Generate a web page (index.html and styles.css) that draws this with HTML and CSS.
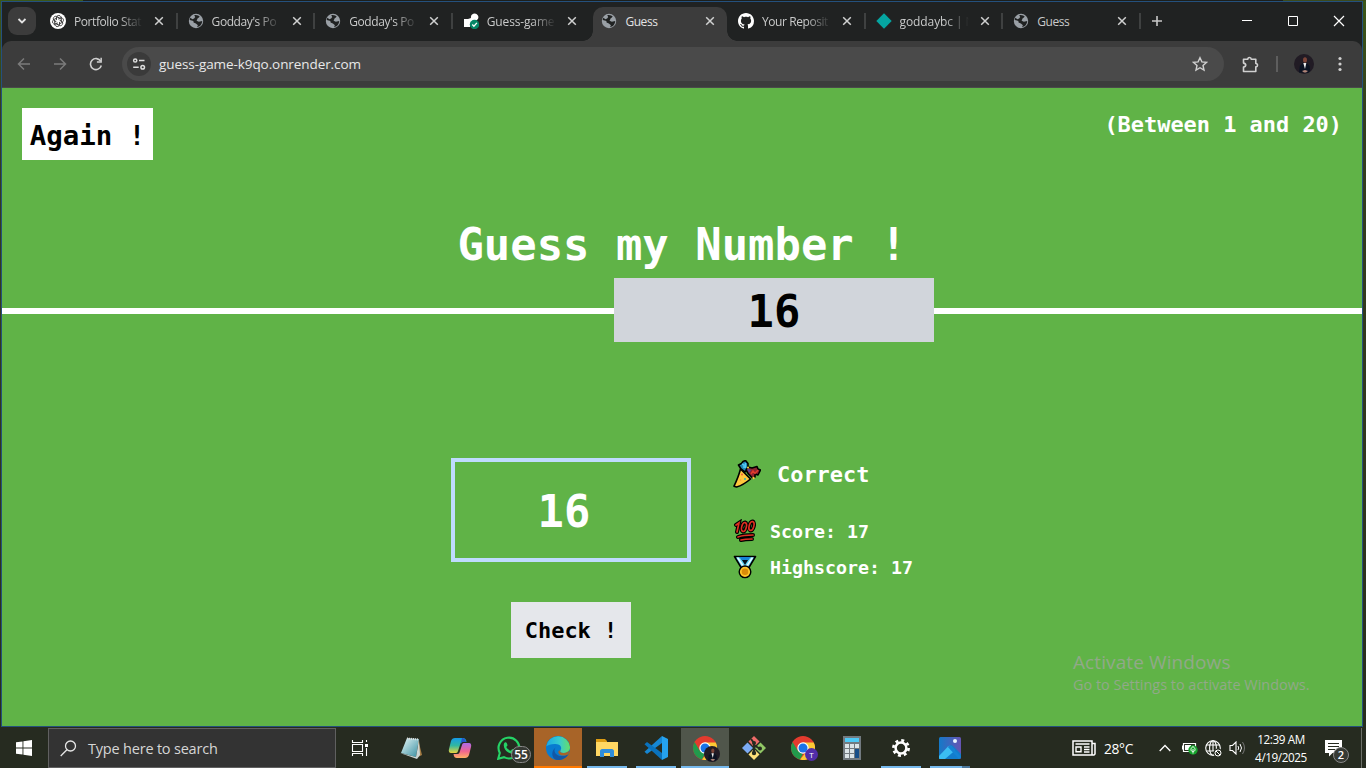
FILE: index.html
```html
<!DOCTYPE html>
<html lang="en">
<head>
<meta charset="utf-8">
<title>Guess</title>
<link rel="stylesheet" href="styles.css">
</head>
<body>
<svg class="defs" width="0" height="0" aria-hidden="true">
  <defs>
    <symbol id="globe" viewBox="0 0 16 16"><circle cx="8" cy="8" r="7.200" fill="#9aa0a6"/><path d="M6.200 2.300c2.200-.7 4.400.1 5.600 1.600L9.600 5.600l-1 2.100 2.300 1.100 3.300-.8c-.1 3.400-2.300 5.700-5.200 6.100l.9-1.900-1.700-1.500-2.700-1.100-.1-1.700-3.600-.8c0-.9.2-1.600.6-2.300l2 1.400 1.700-.6 1.100-1.600z" fill="#202222"/><path d="M9.600 5.600l2.200 1.200 1.700-1.100-1.700-1.800zM5.400 9.600l1.700 3.800 1-1.700-1.200-1.500z" fill="#9aa0a6"/></symbol>
    <symbol id="close" viewBox="0 0 10 10"><path d="M1.200 1.200l7.600 7.600M8.800 1.200L1.200 8.800" stroke="#d0d1d1" stroke-width="1.500"/></symbol>
    <symbol id="chrome" viewBox="0 0 24 24"><circle cx="12" cy="12" r="12" fill="#e33b2e"/><path d="M1.600 6L7 15l5 3-3 5.600A12 12 0 0 1 1.600 6z" fill="#229a4c"/><path d="M12 6.500h10.700A12 12 0 0 1 9 23.600L17 14z" fill="#fcc934"/><circle cx="12" cy="12" r="5.700" fill="#fff"/><circle cx="12" cy="12" r="4.500" fill="#1a73e8"/></symbol>
    <symbol id="portrait" viewBox="0 0 20 20"><circle cx="10" cy="10" r="10" fill="#211b24"/><path d="M5 18.500l.8-6.500 3-3h4l2.800 3 .6 5-2.200 2z" fill="#0c1322"/><path d="M9.300 9h3l-1.300 6z" fill="#eee"/><ellipse cx="11" cy="6" rx="2" ry="2.800" fill="#7d4538"/><path d="M8 17l3-1 3 1-2 1.500h-2z" fill="#b08578"/></symbol>
  </defs>
</svg>
<div class="desktop">
  <div class="window">
    <div class="tabstrip">
      <div class="tab-search"><svg width="10" height="8" viewBox="0 0 10 8"><path d="M1.500 2L5 5.500 8.500 2" fill="none" stroke="#e3e3e3" stroke-width="1.800"/></svg></div>
      <div class="tabs">
        <div class="tab sep"><svg class="fav" viewBox="0 0 16 16"><circle cx="8" cy="8" r="8" fill="#fff"/><g fill="none" stroke="#252525" stroke-width=".8"><path id="petal" d="M8 6.200l2-1.200c1.500-.8 3.500.2 3.500 2.200 0 1-.5 1.800-1.300 2.200L8.500 11.500"/><use href="#petal" transform="rotate(60 8 8)"/><use href="#petal" transform="rotate(120 8 8)"/><use href="#petal" transform="rotate(180 8 8)"/><use href="#petal" transform="rotate(240 8 8)"/><use href="#petal" transform="rotate(300 8 8)"/></g></svg><span class="label fade">Portfolio Stat</span><svg class="x"><use href="#close"/></svg></div>
        <div class="tab sep"><svg class="fav"><use href="#globe"/></svg><span class="label fade">Godday's Po</span><svg class="x"><use href="#close"/></svg></div>
        <div class="tab sep"><svg class="fav"><use href="#globe"/></svg><span class="label fade">Godday's Po</span><svg class="x"><use href="#close"/></svg></div>
        <div class="tab"><svg class="fav" viewBox="0 0 16 16"><path d="M1 6h4l3-1a3.700 3.700 0 1 1 6 2L7 10v4H1z" fill="#fff"/><circle cx="11.500" cy="11.500" r="4.700" fill="#078667"/><path d="M9.300 11.500l1.600 1.700 3-3.300" fill="none" stroke="#fff" stroke-width="1.300"/></svg><span class="label fade soft">Guess-game</span><svg class="x"><use href="#close"/></svg></div>
        <div class="tab active"><svg class="fav"><use href="#globe"/></svg><span class="label">Guess</span><svg class="x"><use href="#close"/></svg></div>
        <div class="tab sep"><svg class="fav" viewBox="0 0 16 16"><path fill="#fff" d="M8 0C3.580 0 0 3.580 0 8c0 3.540 2.290 6.530 5.470 7.590.4.070.55-.17.55-.38 0-.19-.01-.82-.01-1.490-2.010.37-2.530-.49-2.690-.94-.09-.23-.48-.94-.82-1.130-.28-.15-.68-.52-.01-.53.63-.01 1.080.58 1.230.82.72 1.210 1.870.87 2.330.66.07-.52.28-.87.51-1.070-1.780-.2-3.640-.89-3.640-3.950 0-.87.31-1.590.82-2.150-.08-.2-.36-1.020.08-2.120 0 0 .67-.21 2.200.82.640-.18 1.320-.27 2-.27s1.360.09 2 .27c1.530-1.040 2.200-.82 2.200-.82.440 1.100.16 1.920.08 2.120.51.56.82 1.270.82 2.150 0 3.070-1.870 3.750-3.650 3.950.29.25.54.73.54 1.480 0 1.070-.01 1.930-.01 2.200 0 .21.15.46.55.38A8 8 0 0 0 16 8c0-4.420-3.580-8-8-8z"/></svg><span class="label fade">Your Reposit</span><svg class="x"><use href="#close"/></svg></div>
        <div class="tab sep"><svg class="fav" viewBox="0 0 16 16"><path d="M8 .3L15.700 8 8 15.700.3 8z" fill="#05a5a1"/></svg><span class="label fade late">goddaybc | N</span><svg class="x"><use href="#close"/></svg></div>
        <div class="tab sep"><svg class="fav"><use href="#globe"/></svg><span class="label">Guess</span><svg class="x"><use href="#close"/></svg></div>
      </div>
      <svg class="new-tab" width="12" height="12" viewBox="0 0 12 12"><path d="M6 1v10M1 6h10" stroke="#c7c8c8" stroke-width="1.600"/></svg>
      <div class="win-controls">
        <svg viewBox="0 0 12 12"><path d="M1 5.500h10" stroke="#fff"/></svg>
        <svg viewBox="0 0 12 12"><path d="M1.500 1.500h9v9h-9z" fill="none" stroke="#fff"/></svg>
        <svg viewBox="0 0 12 12"><path d="M1 1l10 10M11 1L1 11" stroke="#fff" stroke-width="1.200"/></svg>
      </div>
    </div>
    <div class="toolbar">
      <div class="nav">
        <svg width="14" height="14" viewBox="0 0 14 14"><path d="M13 7H1.500M7 1.500L1.500 7 7 12.500" fill="none" stroke="#7b7b7b" stroke-width="1.500"/></svg>
        <svg width="14" height="14" viewBox="0 0 14 14"><path d="M1 7h11.500M7 1.500L12.500 7 7 12.500" fill="none" stroke="#7b7b7b" stroke-width="1.500"/></svg>
        <svg width="14" height="14" viewBox="0 0 14 14"><path d="M12.300 8.500A5.500 5.500 0 1 1 11.700 4.200" fill="none" stroke="#d0d0d0" stroke-width="1.600"/><path d="M12.900.8v5H7.900V4.300h3.500V.8z" fill="#d0d0d0"/></svg>
      </div>
      <div class="omnibox">
        <span class="site-info"><svg width="14" height="12" viewBox="0 0 14 12"><g fill="none" stroke="#dedede" stroke-width="1.500"><circle cx="3.200" cy="2.500" r="1.600"/><path d="M7 2.500h5.500M1.200 9.200h5.500"/><circle cx="10.700" cy="9.200" r="1.800"/></g></svg></span>
        <span class="url">guess-game-k9qo.onrender.com</span>
        <svg class="star" width="16" height="16" viewBox="0 0 16 16"><path d="M8 1.700l1.900 4.200 4.500.5-3.400 3.100 1 4.600-4-2.400-4 2.400 1-4.600-3.400-3.100 4.500-.5z" fill="none" stroke="#d0d0d0" stroke-width="1.400"/></svg>
      </div>
      <svg class="puzzle" width="17" height="17" viewBox="0 0 17 17"><path d="M1.500 3.200h4.300a1.700 1.700 0 0 1 3.400 0h4.600v4.300a1.700 1.700 0 0 1 0 3.400v4.600H1.500v-4.400c3-.4 3-3.600 0-4z" fill="none" stroke="#d0d0d0" stroke-width="1.600" stroke-linejoin="round"/></svg>
      <span class="divider"></span>
      <svg class="avatar"><use href="#portrait"/></svg>
      <svg class="menu" width="4" height="16" viewBox="0 0 4 16"><g fill="#d0d0d0"><circle cx="2" cy="2.500" r="1.600"/><circle cx="2" cy="8" r="1.600"/><circle cx="2" cy="13.500" r="1.600"/></g></svg>
    </div>
    <main class="game">
      <header class="game-head">
        <button class="again">Again !</button>
        <p class="between">(Between 1 and 20)</p>
      </header>
      <h1>Guess my Number !</h1>
      <div class="secret-row"><span class="line left"></span><div class="secret">16</div><span class="line"></span></div>
      <section class="board">
        <div class="entry">
          <div class="guess">16</div>
          <button class="check">Check !</button>
        </div>
        <div class="results">
          <p class="message"><svg width="28" height="28" viewBox="0 0 28 28"><g stroke="#000" stroke-width="1.600" stroke-linejoin="round"><path d="M5.500 5l3-1.500L10 1.500l2.500-1L15 3.500V9l-3 3-4-3z" fill="#2189b8"/><path d="M13 10l2-3 4 1 5-1.500 1 2.500 2.500 1-2.500 5-3-1v3l-2.500 1-4-4z" fill="#8f2430"/><path d="M7.500 9C6 15 3 22 1 26.200l2.500.8C9 25.500 14 22 17.500 19z" fill="#ffc83d"/></g><path d="M9 4l2 1v3M12.500 3v5" fill="none" stroke="#54c9f2" stroke-width="1.400"/><path d="M14 8.500l4 1.500-2 3z" fill="#5b4396"/><circle cx="15" cy="7.500" r="1" fill="#ffd93d"/><circle cx="20.500" cy="18" r="1.200" fill="#ffc83d"/><path d="M18 14l2-3 2 2.500 3-3.500" fill="none" stroke="#e23c2c" stroke-width="1.400"/><circle cx="9" cy="14.500" r="1" fill="#ee5b40"/><circle cx="12" cy="19" r="1" fill="#35b6b4"/><circle cx="7.500" cy="20" r=".8" fill="#ee9a40"/></svg><span>Correct</span></p>
          <p class="score"><svg width="24" height="24" viewBox="0 0 24 24"><g fill="none" stroke-linecap="round"><g stroke="#000" stroke-width="4"><path d="M3 6l3-2-2 9M5 18c5-2 10-2 15-2M8 21c4-1 7-1 11-1"/><ellipse cx="11" cy="8" rx="2.300" ry="4.600" transform="rotate(15 11 8)"/><ellipse cx="18.500" cy="7" rx="2.300" ry="4.600" transform="rotate(15 18.500 7)"/></g><g stroke="#df2f22" stroke-width="1.700"><path d="M3 6l3-2-2 9M5 18c5-2 10-2 15-2M8 21c4-1 7-1 11-1"/><ellipse cx="11" cy="8" rx="2.300" ry="4.600" transform="rotate(15 11 8)"/><ellipse cx="18.500" cy="7" rx="2.300" ry="4.600" transform="rotate(15 18.500 7)"/></g></g></svg><span>Score: 17</span></p>
          <p class="score"><svg width="24" height="24" viewBox="0 0 24 24"><path d="M1.500 1.500h21L15 14H9z" fill="#62d5f5" stroke="#000" stroke-width="1.600" stroke-linejoin="round"/><path d="M7 2h10l-5 8z" fill="#05101c"/><path d="M6.500 2h11L15.500 5h-7z" fill="#1684d8"/><path d="M10.500 5h3L12 8z" fill="#05101c"/><path d="M4.500 2.500l6 9M19.500 2.500l-6 9" stroke="#e9fbff" stroke-width="1.400"/><circle cx="12" cy="16.800" r="5.800" fill="#ffc328" stroke="#000" stroke-width="1.400"/><circle cx="12" cy="16.800" r="3.300" fill="#d98b09"/></svg><span>Highscore: 17</span></p>
        </div>
      </section>
      <div class="activate"><p class="act-title">Activate Windows</p><p class="act-sub">Go to Settings to activate Windows.</p></div>
    </main>
  </div>
  <footer class="taskbar">
    <div class="start"><svg width="16" height="16" viewBox="0 0 16 16"><path d="M0 2.300L6.500 1.400v6.100H0zM7.400 1.300L16 0v7.500H7.400zM0 8.400h6.500v6.200L0 13.700zM7.400 8.400H16V16l-8.600-1.200z" fill="#fff"/></svg></div>
    <div class="search"><svg width="17" height="17" viewBox="0 0 17 17"><circle cx="10.500" cy="6" r="5" fill="none" stroke="#e6e6e6" stroke-width="1.300"/><path d="M6.900 9.700L.7 16" stroke="#e6e6e6" stroke-width="1.300"/></svg><span>Type here to search</span></div>
    <div class="apps">
      <div class="app task-view"><svg width="18" height="16" viewBox="0 0 18 16"><path d="M1.500 0v2.500h10V0M1.500 16v-2.500h10V16M1.500 4.500h10v7h-10zM15.500 0v2M15.500 8v8" fill="none" stroke="#fff" stroke-width="1.100"/><path d="M14 4h3v3h-3z" fill="#fff"/></svg></div>
      <div class="app"><svg width="24" height="24" viewBox="0 0 24 24"><defs><linearGradient id="note" x2="1" y2="1"><stop stop-color="#e8f8f8"/><stop offset="1" stop-color="#368da0"/></linearGradient></defs><path d="M19 3l4 16-4 2z" fill="#a67d45"/><path d="M8 2l12 1-3 18-15-4z" fill="url(#note)"/><path d="M1 17l16 4 3-17 1 15-3 4z" fill="#cbd5d4"/><path d="M8 2.500l12 1" stroke="#ddd" stroke-width="2" stroke-dasharray="1 1"/></svg></div>
      <div class="app"><svg width="24" height="24" viewBox="0 0 24 24"><defs><linearGradient id="cpA" x2="0" y2="1"><stop stop-color="#149be8"/><stop offset=".5" stop-color="#31b7a0"/><stop offset="1" stop-color="#e8d33d"/></linearGradient><linearGradient id="cpB" x2="0" y2="1"><stop stop-color="#ad6bea"/><stop offset=".55" stop-color="#f0648f"/><stop offset="1" stop-color="#ffb065"/></linearGradient></defs><path d="M7 2h8c2 0 3 1 3.500 4h-4c-1.500 0-2 1-2.500 3l-2 6c-.6 2-1.500 2-3 2H3c-2 0-2.600-2-2-4L3 5c.7-2 2-3 4-3z" fill="url(#cpA)"/><path d="M17 22H9c-2 0-3-1-3.500-4h4c1.500 0 2-1 2.500-3l2-6c.6-2 1.500-2 3-2h4c2 0 2.600 2 2 4l-2 8c-.7 2-2 3-4 3z" fill="url(#cpB)"/><path d="M14 2c2 0 3.500 1 4 4h-3.500L12.500 8z" fill="#2456c9"/></svg></div>
      <div class="app"><svg width="24" height="24" viewBox="0 0 24 24"><path d="M2.800 17A10.400 10.400 0 1 1 7 21.200L1.200 22.800z" fill="none" stroke="#25d366" stroke-width="2.100"/><path d="M7 7.500c1-2 2.500-1.500 3 .2l.6 1.500-1.300 1.800c1 2 2.500 3 4.400 3.800l1.600-1.800 2.700 1.300c.5.200.3 1.800-.5 2.500-1.500 1.400-4 1-6.500-.5-3-2-5-5.500-4-8.800z" fill="#25d366"/></svg><span class="badge wa">55</span></div>
      <div class="app edge"><svg width="24" height="24" viewBox="0 0 24 24"><defs><linearGradient id="eg" x2="1"><stop stop-color="#1aa8e6"/><stop offset=".55" stop-color="#36cbd0"/><stop offset="1" stop-color="#67df65"/></linearGradient></defs><circle cx="12" cy="12" r="12" fill="#087bd0"/><path d="M.2 10.500A12 12 0 0 1 24 11c0 4-3 6-6.500 6-3 0-4-1.200-3-2.700 2.500-4-2-7-6-6.300C5 8 2 9 .2 10.500z" fill="url(#eg)"/><path d="M9.500 11.500c-3 4 1 9.500 7.500 8.500 2-.3 4-1 5.500-2-2 4-6.500 6-10.500 6-6 0-8-8-2.500-12.500z" fill="#1257a6"/><path d="M14.500 14.300c-1 1.500 0 2.700 3 2.700 2.500 0 4.500-1 5.500-2.500l-.5 3.500c-3 2.500-9 2-10-1-.7-2 1-3 2-2.700z" fill="#a86428"/></svg></div>
      <div class="app run"><svg width="24" height="24" viewBox="0 0 24 24"><path d="M1 3h9l2 2v5H1z" fill="#dc9c13"/><path d="M1 6h22v14H1z" fill="#ffd763"/><path d="M5 21v-6c0-1 1-2 2-2h10c1 0 2 1 2 2v6h-4v-4H9v4z" fill="#2f8ddb"/></svg></div>
      <div class="app run"><svg width="24" height="24" viewBox="0 0 24 24"><path d="M18 0l6 3v18l-6 3z" fill="#25a2ee"/><path d="M18 0v7L3 18l-2.500-2.200z" fill="#1687d3"/><path d="M18 24v-7L3 6 .5 8.200z" fill="#0a72bd"/></svg></div>
      <div class="app current"><svg width="24" height="24"><use href="#chrome"/></svg><svg class="mini"><use href="#portrait"/></svg></div>
      <div class="app"><svg width="24" height="24" viewBox="0 0 24 24"><path d="M12 0l5.500 5.500L12 11 6.500 5.500z" fill="#ef6b69"/><path d="M5.500 6.500L11 12l-5.500 5.500L0 12z" fill="#7cabf4"/><path d="M18.500 6.500L24 12l-5.500 5.500L13 12z" fill="#91c765"/><path d="M12 13l5.500 5.500L12 24l-5.500-5.500z" fill="#ffe17a"/><path d="M9 3l3 4v10M12 9l6 4" fill="none" stroke="#262b20" stroke-width="2"/><g fill="#262b20"><circle cx="12" cy="7" r="2"/><circle cx="12" cy="17" r="2.200"/><circle cx="18" cy="12.500" r="2"/></g></svg></div>
      <div class="app"><svg width="24" height="24"><use href="#chrome"/></svg><span class="profile">T</span></div>
      <div class="app"><svg width="24" height="24" viewBox="0 0 24 24"><path d="M3 0h18v24H3z" fill="#727a80"/><path d="M5 2h14v4H5z" fill="#4ec9f5"/><path d="M5 8h4v4H5zM10 8h4v4h-4zM15 8h4v4h-4zM5 13h4v4H5zM10 13h4v4h-4zM5 18h4v4H5zM10 18h4v4h-4z" fill="#dbe4e8"/><path d="M15 13h4v9h-4z" fill="#174e88"/></svg></div>
      <div class="app run"><svg width="18" height="18" viewBox="0 0 18 18"><circle cx="9" cy="9" r="7.600" fill="none" stroke="#fff" stroke-width="2.700" stroke-dasharray="2.980 2.990"/><circle cx="9" cy="9" r="5.400" fill="none" stroke="#fff" stroke-width="2.500"/></svg></div>
      <div class="app run multi"><svg width="24" height="24" viewBox="0 0 24 24"><defs><linearGradient id="ph" x2="1"><stop stop-color="#1479c8"/><stop offset="1" stop-color="#6754b3"/></linearGradient></defs><rect x="1" y="1" width="22" height="22" rx="1.500" fill="url(#ph)"/><path d="M1 20L12 10c1-1 2-1 3 0l8 8v3c0 1-1 2-2 2H1z" fill="#127dcc"/><path d="M1 20l9-9.500c1-1 2-1 3 0l4 4L7 23H2c-1 0-1-1-1-1z" fill="#3bbdf2"/><path d="M11 10l11 12" stroke="#1583d4" stroke-width="3"/><circle cx="17" cy="5" r="2" fill="#e9f5ff"/></svg></div>
    </div>
    <div class="tray">
      <svg class="news" width="24" height="16" viewBox="0 0 24 16"><path d="M1 1h19v14H1zM20 3.500h3V14l-1 1h-2" fill="none" stroke="#fff" stroke-width="1.500"/><path d="M3.500 4h14M12 7h5.500M12 9.500h5.500M12 12h5.500M4 7h5v4.700H4z" fill="none" stroke="#fff" stroke-width="1.400"/></svg>
      <span class="temp">28°C</span>
      <svg class="up" width="12" height="8" viewBox="0 0 12 8"><path d="M.7 7L6 1.500 11.300 7" fill="none" stroke="#fff" stroke-width="1.300"/></svg>
      <svg class="battery" width="16" height="14" viewBox="0 0 16 14"><path d="M1.500 2.500h12v8h-12z" fill="none" stroke="#fff" stroke-width="1.200"/><path d="M0 4.500h1v4H0zM3 4h6v5H3z" fill="#fff"/><circle cx="11" cy="9" r="4.700" fill="#16a32c"/><path d="M11 5.500c3 2 2.500 5 0 5-2.500 0-3-3 0-5zM11 8v4.500" fill="none" stroke="#fff" stroke-width=".9"/></svg>
      <svg class="net" width="17" height="17" viewBox="0 0 17 17"><g fill="none" stroke="#fff" stroke-width="1.100"><circle cx="8" cy="8" r="7.300"/><ellipse cx="8" cy="8" rx="3.400" ry="7.300"/><path d="M1.500 5h13M1.500 11h8M8 .7v10"/></g><circle cx="13" cy="13" r="4.500" fill="#262b20"/><circle cx="13" cy="13" r="3" fill="none" stroke="#fff"/><path d="M11 11l4 4" stroke="#fff"/></svg>
      <svg class="sound" width="17" height="14" viewBox="0 0 17 14"><path d="M1 4.500h2.500L7 1v12L3.500 9.500H1z" fill="none" stroke="#fff" stroke-width="1.100"/><path d="M9 5q1.400 2 0 4M11 3q3 4 0 8" fill="none" stroke="#fff"/><path d="M13.500 1q4 6 0 12" fill="none" stroke="#777"/></svg>
      <div class="clock"><span>12:39 AM</span><span>4/19/2025</span></div>
      <div class="notice"><svg width="17" height="17" viewBox="0 0 17 17"><path d="M0 0h17v13H7.500L4 16.500V13H0z" fill="#fff"/><path d="M3 3.500h11M3 6.500h11M3 9.500h7" stroke="#262b20"/></svg><span class="badge count">2</span></div>
      <span class="peek"></span>
    </div>
  </footer>
</div>
</body>
</html>
```
FILE: styles.css
```css
* { box-sizing: border-box; }
body { margin: 0; overflow: hidden; font-family: "Open Sans", "Noto Sans", sans-serif; }
p, h1 { margin: 0; }
svg { display: block; flex: none; }
button { border: 0; padding: 0; color: #000; }
.defs { position: absolute; }

.desktop { width: 1366px; height: 768px; display: flex; flex-direction: column; background: linear-gradient(90deg, #3b5719 83px, #1c1f1c 83px 1283px, #3b4a1d 1283px) 0 0 / 100% 1px no-repeat, linear-gradient(#3b5719, #333e1d 15%, #30361d 60%, #252b1d); }
.window { width: 1362px; height: 726px; margin: 1px 0 0 1px; border: 1px solid #24507d; display: flex; flex-direction: column; background: #202222; }

/* Browser tabs */
.tabstrip { height: 39px; display: flex; align-items: center; background: #202222; }
.tab-search { width: 28px; height: 28px; margin: -2px 0 0 6px; border-radius: 9px; background: #3c3c3c; display: grid; place-items: center; flex: none; }
.tabs { display: grid; grid-template-columns: repeat(8, 137.6px); margin-left: 4px; height: 39px; }
.tab { display: flex; align-items: center; position: relative; padding: 0 0 1px 10px; }
.fav { width: 16px; height: 16px; }
.label { width: 69px; margin: 2px 0 0 8px; font-size: 12px; letter-spacing: -0.42px; color: #c9caca; white-space: nowrap; line-height: 18px; }
.fade { -webkit-mask-image: linear-gradient(90deg, #000 65%, transparent 100%); mask-image: linear-gradient(90deg, #000 65%, transparent 100%); }
.soft { letter-spacing: -0.15px; }
.late { letter-spacing: -0.1px; }
.x { width: 10px; height: 10px; margin-left: 11px; }
.sep::after { content: ""; width: 2px; height: 16px; margin-left: auto; background: #3f4141; }
.active { background: #3c3c3c; border-radius: 10px 10px 0 0; margin: 5px 1px 0 3px; padding: 0 0 6px 8px; }
.active .label { color: #e3e3e3; }
.active::before, .active::after { content: ""; position: absolute; bottom: 0; width: 10px; height: 10px; }
.active::before { left: -10px; background: radial-gradient(circle at 0 0, transparent 9.5px, #3c3c3c 10px); }
.active::after { right: -10px; background: radial-gradient(circle at 100% 0, transparent 9.5px, #3c3c3c 10px); }
.new-tab { margin: -2px 0 0 10px; }
.win-controls { display: flex; gap: 34px; margin: -2px 0 0 auto; padding-right: 17px; }
.win-controls svg { width: 12px; height: 12px; }

/* Address bar */
.toolbar { height: 47px; display: flex; align-items: center; background: #3c3c3c; border-radius: 9px 9px 0 0; border-bottom: 1px solid #4a4a4a; flex: none; }
.nav { display: flex; gap: 22px; padding-left: 15px; }
.omnibox { width: 1102px; height: 34px; margin-left: 19px; border-radius: 17px; background: #4a4a4a; display: flex; align-items: center; padding: 0 16px 0 5px; }
.site-info { width: 24px; height: 24px; border-radius: 50%; background: #3a3a3a; display: grid; place-items: center; }
.url { margin-left: 8px; font-size: 13.5px; letter-spacing: -0.08px; color: #e8e8e8; line-height: 20px; }
.star { margin-left: auto; }
.puzzle { margin-left: 18px; }
.divider { width: 2px; height: 16px; margin-left: 17px; background: #5e5e5e; }
.avatar { width: 20px; height: 20px; margin-left: 16px; }
.menu { margin-left: 24px; }

/* Game */
.game { height: 638px; background: #60b347; font-family: "DejaVu Sans Mono", monospace; font-weight: 700; color: #fff; display: flex; flex-direction: column; position: relative; }
.game-head { display: flex; justify-content: space-between; padding: 20px 20px 0; height: 72px; }
.again { width: 131px; height: 52px; background: #fff; font: 700 27.4px/52px "DejaVu Sans Mono", monospace; padding-top: 2px; }
.between { font-size: 21.93px; line-height: 34px; }
h1 { margin-top: 53px; height: 65px; font-size: 43.85px; line-height: 64px; text-align: center; letter-spacing: 0.03px; }
.secret-row { display: flex; align-items: center; height: 64px; }
.line { flex: 1; height: 6px; margin-top: 2px; background: #fff; }
.line.left { flex: 0 0 612px; }
.secret { width: 320px; height: 64px; background: #d1d5db; color: #000; font-size: 43.85px; line-height: 68px; text-align: center; }
.board { display: flex; padding: 116px 0 0 449px; }
.entry { width: 240px; display: flex; flex-direction: column; align-items: center; gap: 40px; }
.guess { width: 240px; height: 104px; border: 4px solid #bfdbfe; font-size: 43.85px; line-height: 100px; text-align: center; padding-right: 14px; }
.check { width: 120px; height: 56px; background: #e5e7eb; font: 700 21.93px/54px "DejaVu Sans Mono", monospace; padding-top: 2px; }
.results { margin-left: 42px; }
.results p { display: flex; align-items: center; }
.message { height: 32px; gap: 16px; font-size: 21.93px; margin-bottom: 23px; }
.score { height: 36px; gap: 13px; font-size: 18.27px; }
.activate { position: absolute; left: 1071px; top: 561px; font-family: "Open Sans", sans-serif; font-weight: 400; color: #91a989; white-space: nowrap; }
.act-title { font-size: 19px; line-height: 26px; letter-spacing: 0.1px; }
.act-sub { font-size: 14.4px; line-height: 19px; letter-spacing: 0.02px; }

/* Taskbar */
.taskbar { height: 40px; margin-top: 1px; display: flex; background: #262b20; color: #fff; flex: none; }
.start { width: 48px; display: grid; place-items: center; }
.search { width: 288px; border: 1px solid #606060; background: #333; display: flex; align-items: center; padding-left: 11px; gap: 11px; font-size: 14.5px; letter-spacing: -0.2px; color: #d6d6d6; }
.apps { display: grid; grid-template-columns: repeat(13, 49px); }
.app { position: relative; display: grid; place-items: center; padding-left: 3px; }
.task-view { padding: 0 1px 0 0; }
.edge { background: #a86428; border-bottom: 2px solid #ff7900; margin: 0 -1px 0 2px; padding: 0; width: 48px; }
.edge svg { margin-top: 2px; }
.run::after { content: ""; position: absolute; bottom: 0; left: 6px; width: 40px; height: 2px; background: #76b9ed; }
.multi::after { background: linear-gradient(90deg, #76b9ed 32px, #4b769a 32px); }
.current { background: #50564b; border-bottom: 2px solid #76b9ed; width: 48px; margin-left: 2px; padding: 0; }
.current > svg:first-child { margin-top: 2px; }
.mini { position: absolute; left: 23px; top: 18px; width: 16px; height: 16px; }
.profile { position: absolute; left: 28px; top: 20px; width: 13px; height: 13px; border-radius: 50%; background: #512da8; font-size: 8px; line-height: 13px; text-align: center; }
.badge { position: absolute; display: grid; place-items: center; border: 1px solid #888; background: #363a34; border-radius: 10px; font-weight: 600; }
.wa { left: 28px; top: 18px; width: 20px; height: 17px; font-size: 12px; line-height: 14px; }
.tray { margin-left: auto; display: flex; align-items: center; height: 40px; }
.temp { width: 30px; margin-left: 8px; font-size: 13.8px; letter-spacing: -0.35px; white-space: nowrap; }
.up { margin-left: 25px; }
.battery { margin-left: 11px; }
.net { margin-left: 7px; }
.sound { margin-left: 7px; }
.clock { width: 56px; margin-left: 7px; display: flex; flex-direction: column; align-items: center; font-size: 11.7px; line-height: 18px; letter-spacing: -0.4px; white-space: nowrap; }
.notice { position: relative; margin-left: 16px; width: 24px; height: 17px; }
.count { left: 8px; top: 7px; width: 16px; height: 16px; font-size: 11px; line-height: 14px; }
.peek { width: 1px; height: 40px; margin: 0 4px 0 12px; background: #6c7068; }
```
